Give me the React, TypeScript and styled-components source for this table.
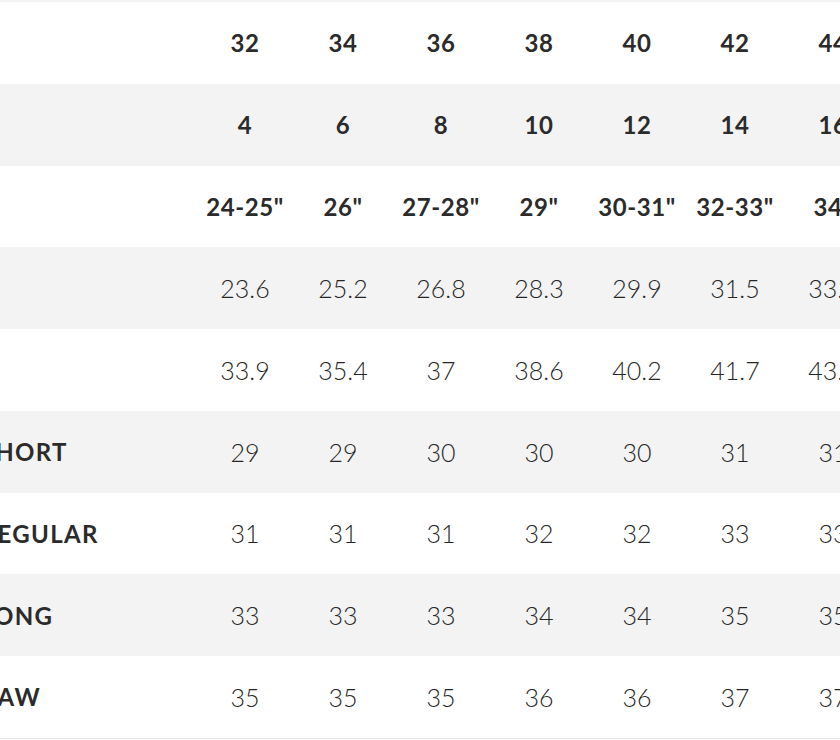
import styled, { createGlobalStyle } from "styled-components";

const GlobalStyle = createGlobalStyle`
  html, body {
    margin: 0;
    padding: 0;
    background: #ffffff;
    overflow: hidden;
  }
  body {
    font-family: Lato, "Noto Sans", sans-serif;
    color: #2e2e2e;
  }
`;

const Viewport = styled.div`
  width: 840px;
  height: 740px;
  overflow: hidden;
  border-top: 2px solid #f3f3f3;
  box-sizing: border-box;
`;

const Table = styled.div`
  margin-left: -126px;
  display: flex;
  flex-direction: column;
  width: max-content;
`;

const Row = styled.div<{ $shaded: boolean }>`
  display: grid;
  grid-template-columns: 322px repeat(7, 98px);
  height: 81.75px;
  align-items: center;
  background: ${(p) => (p.$shaded ? "#f3f3f3" : "#ffffff")};
`;

const Label = styled.div`
  font-weight: 700;
  font-size: 24px;
  letter-spacing: 1.3px;
  text-transform: uppercase;
  white-space: nowrap;
  color: #2b2b2b;
`;

const Cell = styled.div<{ $bold: boolean }>`
  text-align: center;
  white-space: nowrap;
  font-size: ${(p) => (p.$bold ? "24px" : "25px")};
  font-weight: ${(p) => (p.$bold ? 700 : 300)};
  letter-spacing: ${(p) => (p.$bold ? "0.6px" : "0")};
  color: ${(p) => (p.$bold ? "#2b2b2b" : "#262626")};
`;

const BottomRule = styled.div`
  height: 1px;
  background: #e4e4e4;
`;

interface SizeRow {
  label: string;
  bold: boolean;
  values: string[];
}

const rows: SizeRow[] = [
  { label: "Size", bold: true, values: ["32", "34", "36", "38", "40", "42", "44"] },
  { label: "US", bold: true, values: ["4", "6", "8", "10", "12", "14", "16"] },
  {
    label: "Waist",
    bold: true,
    values: ["24-25\"", "26\"", "27-28\"", "29\"", "30-31\"", "32-33\"", "34\""],
  },
  { label: "Waist", bold: false, values: ["23.6", "25.2", "26.8", "28.3", "29.9", "31.5", "33.1"] },
  { label: "Hip", bold: false, values: ["33.9", "35.4", "37", "38.6", "40.2", "41.7", "43.3"] },
  { label: "Inseam Short", bold: false, values: ["29", "29", "30", "30", "30", "31", "31"] },
  { label: "Inseam Regular", bold: false, values: ["31", "31", "31", "32", "32", "33", "33"] },
  { label: "Inseam Long", bold: false, values: ["33", "33", "33", "34", "34", "35", "35"] },
  { label: "Inseam Raw", bold: false, values: ["35", "35", "35", "36", "36", "37", "37"] },
];

export default function App() {
  return (
    <>
      <GlobalStyle />
      <Viewport>
        <Table>
          {rows.map((row, i) => (
            <Row key={i} $shaded={i % 2 === 1}>
              <Label>{row.label}</Label>
              {row.values.map((v, j) => (
                <Cell key={j} $bold={row.bold}>
                  {v}
                </Cell>
              ))}
            </Row>
          ))}
          <BottomRule />
        </Table>
      </Viewport>
    </>
  );
}
